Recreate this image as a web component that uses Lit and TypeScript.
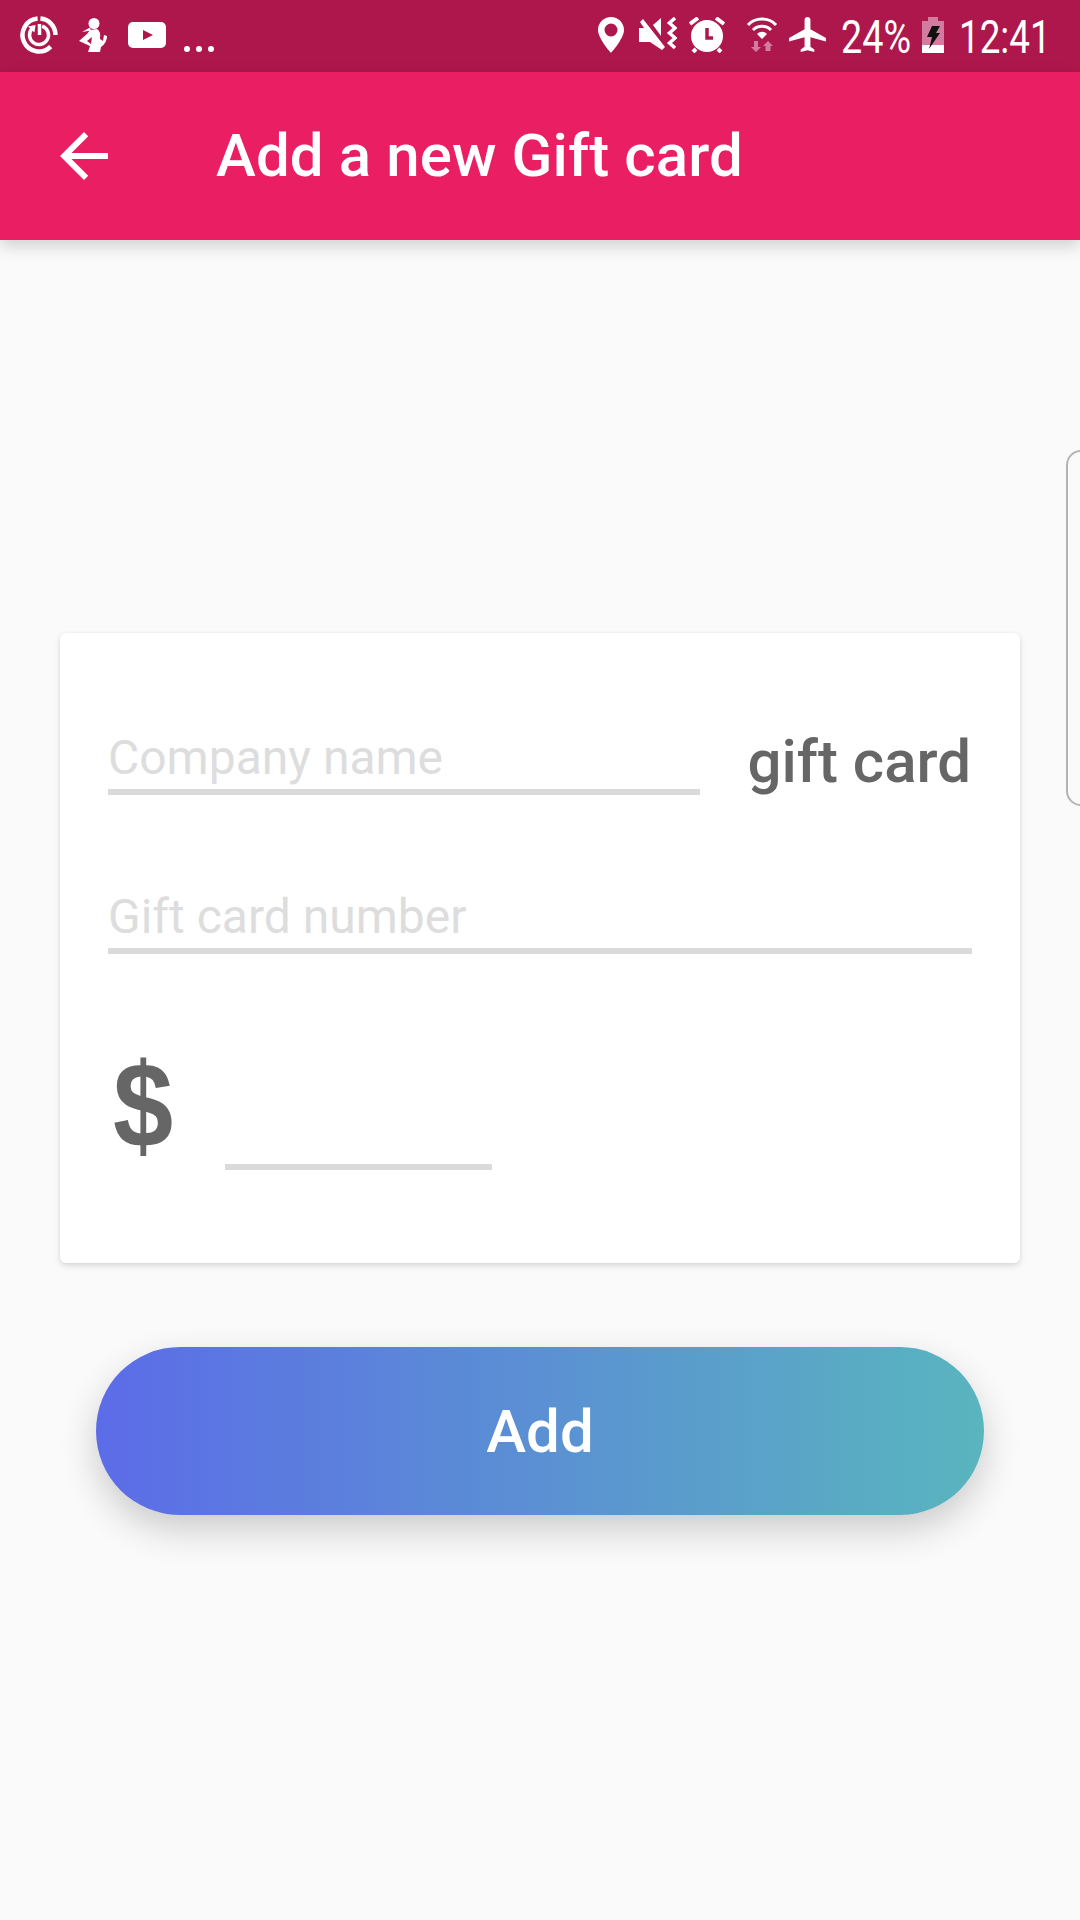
import { LitElement, html, css } from "lit";
import { customElement } from "lit/decorators.js";

@customElement("app-root")
export class AppRoot extends LitElement {
  static styles = css`
    :host { display: block; width: 1080px; font-family: Roboto, "Noto Sans", sans-serif; }
    .page { position: relative; width: 1080px; height: 1920px; background: #fafafa; display: flex; flex-direction: column; overflow: hidden; }

    .status { flex: none; height: 72px; background: #ae174b; display: flex; align-items: flex-start; color: #fff; }
    .status svg { display: block; flex: none; }
    .left { display: flex; align-items: flex-start; padding: 16px 0 0 20px; }
    .ring { width: 38px; height: 38px; margin-right: 21px; }
    .runner { width: 28px; height: 36px; margin-top: 1px; margin-right: 21px; }
    .yt { width: 38px; height: 26px; margin-top: 6px; margin-right: 18px; }
    .dots { width: 30px; height: 6px; margin-top: 30px; }
    .right { margin-left: auto; display: flex; align-items: flex-start; padding: 17px 0 0 0; }
    .pin { width: 26px; height: 36px; margin-right: 15px; }
    .mute { width: 38px; height: 36px; margin-right: 12px; }
    .alarm { width: 37px; height: 36px; margin-right: 20px; }
    .wifi { width: 32px; height: 36px; margin-top: -1px; margin-right: 11px; }
    .plane { width: 37px; height: 35px; margin-right: 15px; }
    .batt { width: 22px; height: 36px; margin-left: 10px; margin-right: 15px; }
    .num { font-size: 46px; line-height: 40px; font-weight: 400; white-space: nowrap; transform-origin: left top; }
    .pct { width: 71px; transform: scaleX(0.82); }
    .time { width: 91px; margin-right: 30px; transform: scaleX(0.8); }

    .bar { flex: none; position: relative; z-index: 1; height: 168px; background: #ea1e63; color: #fff; display: flex; align-items: center; box-shadow: 0 6px 15px rgba(0, 0, 0, 0.17); }
    .back { display: block; width: 72px; height: 72px; margin-left: 48px; margin-right: 96px; fill: #fff; }
    .title { font-size: 60px; font-weight: 500; line-height: 72px; white-space: nowrap; letter-spacing: 0.1px; }

    .card { flex: none; margin: 393px 60px 0; height: 630px; box-sizing: border-box; padding: 0 48px; background: #fff; border-radius: 6px; box-shadow: 0 3px 6px rgba(0, 0, 0, 0.13), 0 0 3px rgba(0, 0, 0, 0.05); display: flex; flex-direction: column; }
    .row1 { height: 162px; display: flex; align-items: flex-end; gap: 47px; }
    .field { box-sizing: border-box; border-bottom: 6px solid #dadada; font-size: 48px; line-height: 56px; padding-bottom: 3px; color: #dddddd; white-space: nowrap; }
    .grow { flex: 1; }
    .suffix { font-size: 60px; font-weight: 500; line-height: 70px; color: #666; white-space: nowrap; margin-bottom: -2px; margin-right: 1px; }
    .row2 { height: 159px; display: flex; flex-direction: column; justify-content: flex-end; }
    .row3 { height: 216px; display: flex; align-items: flex-end; }
    .dollarbox { width: 117px; flex: none; padding-left: 5px; box-sizing: border-box; margin-bottom: 5px; }
    .dollar { font-family: "Liberation Sans", Arial, sans-serif; font-size: 120px; font-weight: 700; line-height: 120px; color: #666; transform: scaleX(0.9); transform-origin: left center; }
    .amount { width: 267px; height: 6px; background: #dadada; }

    .add { flex: none; margin: 84px 96px 0; height: 168px; border: 0; padding: 0; border-radius: 84px; background: linear-gradient(90deg, #5c6ce8, #59b5be); box-shadow: 0 15px 36px rgba(0, 0, 0, 0.19); color: #fff; font-family: inherit; font-size: 60px; font-weight: 500; }

    .handle { position: absolute; left: 1066px; top: 450px; width: 30px; height: 356px; box-sizing: border-box; border: 2px solid #b4b4b4; border-radius: 22px; }
  `;

  render() {
    return html`
      <div class="page">
        <div class="status">
          <div class="left">
            <svg class="ring" viewBox="0 0 38 38" fill="none" stroke="#fff">
              <path d="M20.400 2.600A16.500 16.500 0 0 1 35.500 19" stroke-width="4.500"/>
              <path d="M30.700 30.700A16.500 16.500 0 1 1 17.600 2.600" stroke-width="4.500"/>
              <path d="M22.200 10.100A9.500 9.500 0 1 1 12.300 12.300" stroke-width="3.500"/>
              <path d="M19.500 8V19" stroke-width="3.500"/>
              <path d="M8 10.500L15.500 9 14.500 16.500z" fill="#fff" stroke="none"/>
            </svg>
            <svg class="runner" viewBox="0 0 28 36" fill="#fff">
              <circle cx="15" cy="6.500" r="5.500"/>
              <path d="M3 15L11 10.500l1 3z"/>
              <path fill-rule="evenodd" d="M11 13L18 12Q22 14 21 22L24 24L25 18L28 19Q28 26 22 30L21 35H9L11 29L0 24L8 17Zm-3 11L13 20l-1 7z"/>
            </svg>
            <svg class="yt" viewBox="0 0 38 26">
              <rect width="38" height="26" rx="5" fill="#fff"/>
              <path d="M15 8l10 5-10 5z" fill="#ae174b"/>
            </svg>
            <svg class="dots" viewBox="0 0 30 6" fill="#fff">
              <circle cx="3" cy="3" r="3"/><circle cx="15" cy="3" r="3"/><circle cx="27" cy="3" r="3"/>
            </svg>
          </div>
          <div class="right">
            <svg class="pin" viewBox="0 0 26 36">
              <path fill-rule="evenodd" fill="#fff" d="M13 0C5.800 0 0 5.800 0 13c0 8.500 13 23 13 23s13-14.500 13-23C26 5.800 20.200 0 13 0zm0 6.500a6.500 6.500 0 1 1 0 13 6.500 6.500 0 0 1 0-13z"/>
            </svg>
            <svg class="mute" viewBox="0 0 38 36">
              <path fill="#fff" d="M1 5L4 2L26 30L23 33L11 25H0V11H5z"/>
              <path fill="#fff" d="M14 8L22 1V19z"/>
              <path d="M36 1l-5.500 5 5.500 5-5.500 5 5.500 5-5.500 5 5.500 5" fill="none" stroke="#fff" stroke-width="3.500"/>
            </svg>
            <svg class="alarm" viewBox="0 0 37 36">
              <circle cx="18" cy="19" r="16" fill="#fff"/>
              <path d="M1 7L9 1M35 7L27 1M4 35l3-3M32 35l-3-3" stroke="#fff" stroke-width="4"/>
              <path d="M18 11v10H24" fill="none" stroke="#ae174b" stroke-width="3.500"/>
            </svg>
            <svg class="wifi" viewBox="0 0 32 36" fill="none">
              <path d="M2 9C9 1 23 1 30 9M7 14C12 9 20 9 25 14" stroke="#fff" stroke-width="3"/>
              <path d="M11 18c3-3 7-3 10 0l-5 5z" fill="#fff"/>
              <path fill="#d27d9f" d="M8 25h4v6h3l-5 5-5-5h3zM22 25l5 5h-2.500v5h-5v-5H17z"/>
            </svg>
            <svg class="plane" viewBox="2 2 19 20" preserveAspectRatio="none">
              <path fill="#fff" d="M21 16v-2l-8-5V3.500c0-.83-.67-1.500-1.500-1.500S10 2.670 10 3.500V9l-8 5v2l8-2.500V19l-2 1.500V22l3.500-1 3.500 1v-1.500L13 19v-5.500l8 2.500z"/>
            </svg>
            <div class="num pct">24%</div>
            <svg class="batt" viewBox="0 0 22 36">
              <path fill="#d27d9f" d="M6 0h10v4h6v24H0V4h6z"/>
              <rect y="28" width="22" height="8" fill="#fff"/>
              <path fill="#111" d="M10 9h8l-4 7h4L7 32l3-12H5z"/>
            </svg>
            <div class="num time">12:41</div>
          </div>
        </div>

        <div class="bar">
          <svg class="back" viewBox="0 0 24 24"><path d="M20 11H7.830l5.590-5.590L12 4l-8 8 8 8 1.410-1.410L7.830 13H20v-2z"/></svg>
          <div class="title">Add a new Gift card</div>
        </div>

        <div class="card">
          <div class="row1">
            <div class="field grow">Company name</div>
            <div class="suffix">gift card</div>
          </div>
          <div class="row2">
            <div class="field">Gift card number</div>
          </div>
          <div class="row3">
            <div class="dollarbox"><div class="dollar">$</div></div>
            <div class="amount"></div>
          </div>
        </div>

        <button class="add">Add</button>

        <div class="handle"></div>
      </div>
    `;
  }
}
